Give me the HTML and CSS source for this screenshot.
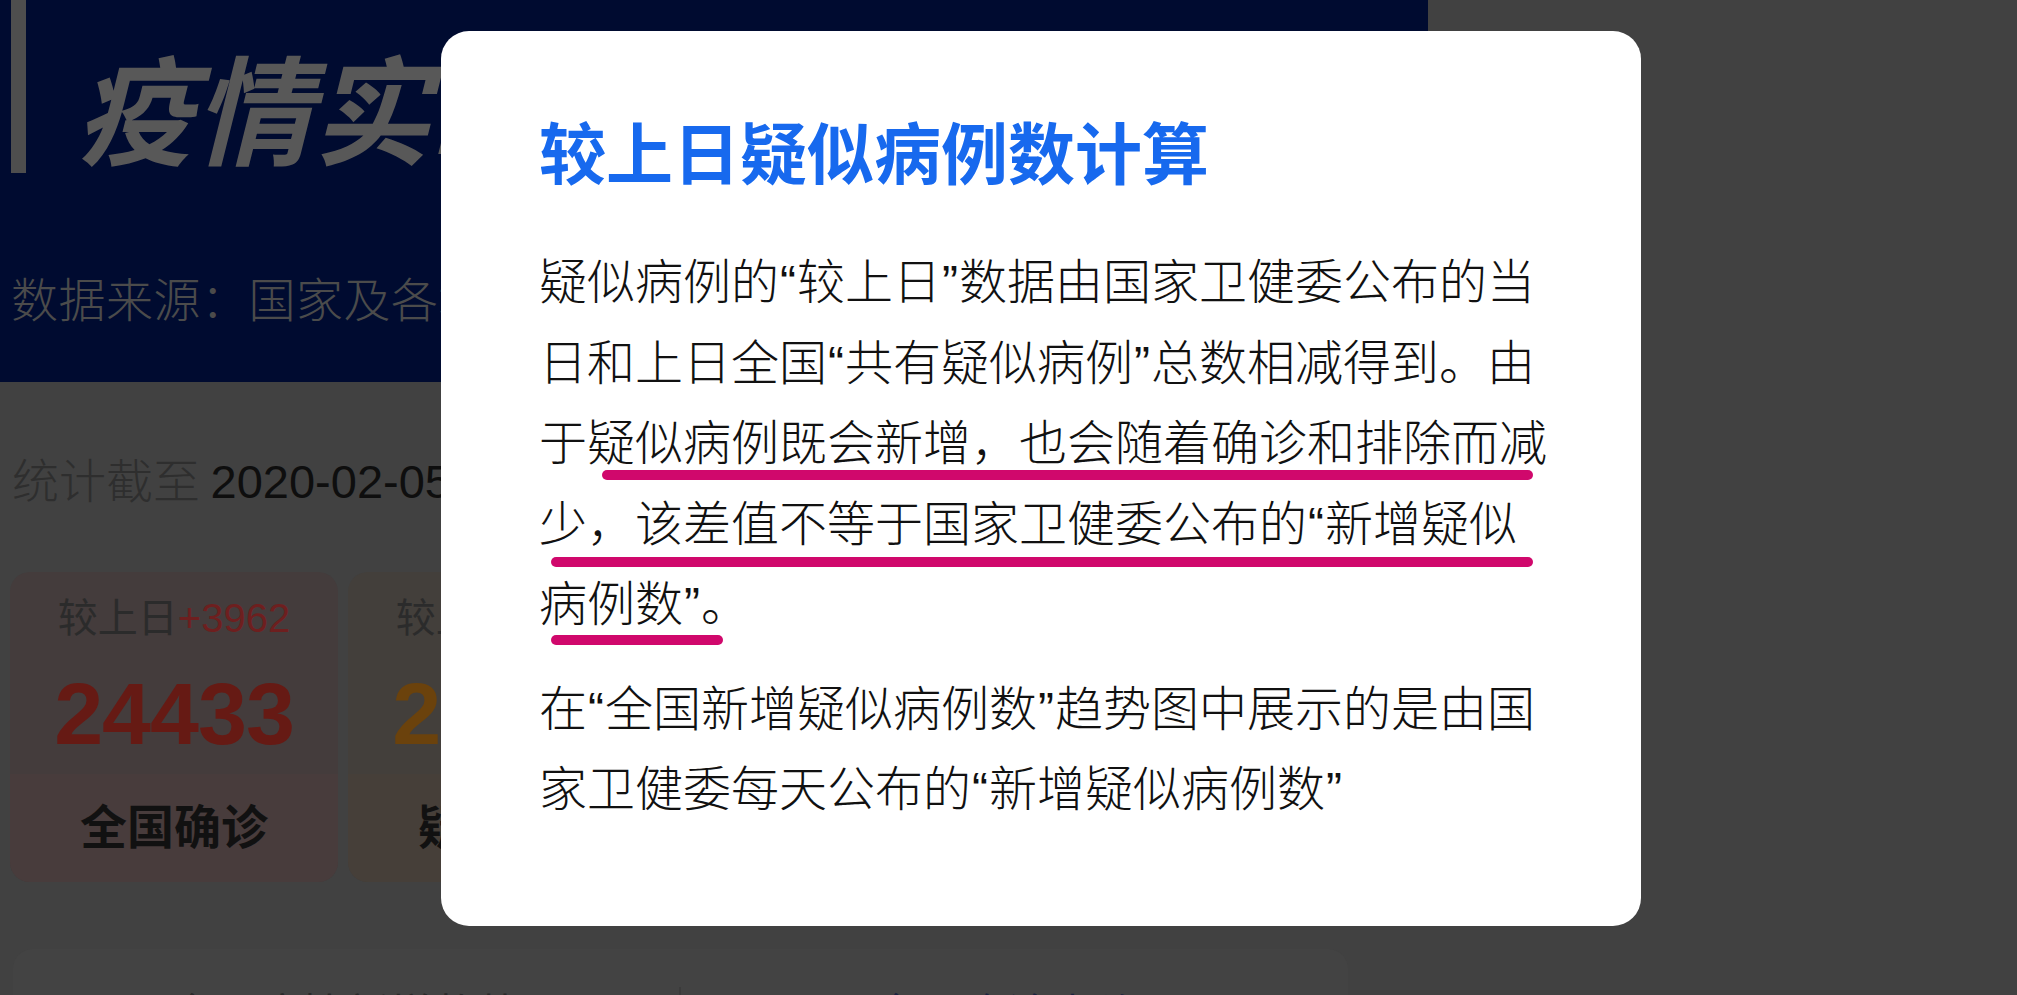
FILE: index.html
```html
<!DOCTYPE html>
<html lang="zh-CN">
<head>
<meta charset="utf-8">
<title>较上日疑似病例数计算</title>
<link rel="stylesheet" href="styles.css">
</head>
<body>
<div class="page">
  <header class="hero">
    <div class="hero-title-row">
      <h1 class="hero-title">疫情实时大数据报告</h1>
    </div>
    <p class="hero-source">数据来源：国家及各地卫健委每日信息发布</p>
  </header>

  <main class="content">
    <p class="stat-time"><span class="stat-label">统计截至</span> <span class="stat-date">2020-02-05 23:41 更新于 2 分钟前</span></p>

    <div class="cards">
      <div class="card card-confirm">
        <div class="card-top">
          <p class="card-delta">较上日<span class="delta-num">+3962</span></p>
          <p class="card-num">24433</p>
        </div>
        <div class="card-band">全国确诊</div>
      </div>
      <div class="card card-suspect">
        <div class="card-top">
          <p class="card-delta">较上日<span class="delta-num">+5328</span></p>
          <p class="card-num">23260</p>
        </div>
        <div class="card-band">疑似病例</div>
      </div>
      <div class="card card-cure">
        <div class="card-top">
          <p class="card-delta">较上日<span class="delta-num">+262</span></p>
          <p class="card-num">907</p>
        </div>
        <div class="card-band">治愈人数</div>
      </div>
      <div class="card card-dead">
        <div class="card-top">
          <p class="card-delta">较上日<span class="delta-num">+65</span></p>
          <p class="card-num">491</p>
        </div>
        <div class="card-band">死亡人数</div>
      </div>
    </div>

    <section class="panel">
      <div class="panel-tabs">
        <span class="panel-tab">全国疫情新增趋势</span>
        <span class="panel-tab panel-tab-active">全国确诊/疑似</span>
      </div>
    </section>
  </main>
</div>

<div class="modal" role="dialog">
  <h2 class="modal-title">较上日疑似病例数计算</h2>
  <div class="modal-text first">
    <p>疑似病例的<span class="q">“</span>较上日<span class="q">”</span>数据由国家卫健委公布的当日和上日全国<span class="q">“</span>共有疑似病例<span class="q">”</span>总数相减得到。由于疑似病例既会新增，也会随着确诊和排除而减少，该差值不等于国家卫健委公布的<span class="q">“</span>新增疑似病例数<span class="q">”</span>。</p>
    <span class="mark mark-1"></span>
    <span class="mark mark-2"></span>
    <span class="mark mark-3"></span>
  </div>
  <div class="modal-text">
    <p>在<span class="q">“</span>全国新增疑似病例数<span class="q">”</span>趋势图中展示的是由国家卫健委每天公布的<span class="q">“</span>新增疑似病例数<span class="q">”</span></p>
  </div>
</div>
</body>
</html>
```

FILE: styles.css
```css
* { box-sizing: border-box; }

html, body {
  margin: 0;
  padding: 0;
}

body {
  width: 2017px;
  height: 995px;
  overflow: hidden;
  background: #414141;
  font-family: "Noto Sans CJK SC", "Liberation Sans", sans-serif;
}

p, h1, h2 { margin: 0; }

.page {
  width: 1428px;
}

/* header */
.hero {
  height: 382px;
  background: #000b30;
  padding-left: 11px;
  overflow: hidden;
}

.hero-title-row {
  height: 173px;
  border-left: 15px solid #4e4e4e;
  padding-top: 46px;
  padding-left: 50px;
}

.hero-title {
  font-size: 118px;
  line-height: 118px;
  font-weight: 700;
  font-style: italic;
  color: #585858;
  white-space: nowrap;
}

.hero-source {
  margin-top: 100px;
  font-size: 47px;
  line-height: 47px;
  letter-spacing: 0.5px;
  color: #4b4b4b;
  white-space: nowrap;
  font-weight: 300;
}

/* content under header */
.content {
  padding-left: 10px;
  width: 1350px;
}

.stat-time {
  padding-top: 72px;
  padding-left: 2px;
  font-size: 47px;
  line-height: 47px;
  white-space: nowrap;
}

.stat-label {
  color: #2e2e2e;
  font-weight: 300;
}

.stat-date {
  font-family: "Liberation Sans", sans-serif;
  color: #0e0e0e;
}

.cards {
  margin-top: 67px;
  display: grid;
  grid-template-columns: repeat(4, 328px);
  gap: 10px;
}

.card {
  height: 310px;
  border-radius: 20px;
  overflow: hidden;
  display: flex;
  flex-direction: column;
  text-align: center;
}

.card-top {
  flex: 1;
  padding-top: 22px;
}

.card-delta {
  font-size: 40px;
  line-height: 42px;
  color: #2b2b2b;
  white-space: nowrap;
}

.delta-num {
  font-family: "Liberation Sans", sans-serif;
}

.card-num {
  margin-top: 31px;
  font-family: "Liberation Sans", sans-serif;
  font-weight: 700;
  font-size: 88px;
  line-height: 88px;
  letter-spacing: -1px;
}

.card-band {
  height: 108px;
  padding-bottom: 10px;
  display: flex;
  align-items: center;
  justify-content: center;
  font-size: 47px;
  font-weight: 700;
  color: #111111;
}

.card-confirm { background: #443c3c; }
.card-confirm .card-band { background: #483c3c; }
.card-confirm .delta-num { color: #6e1f1f; }
.card-confirm .card-num { color: #661a14; }

.card-suspect { background: #433f3b; }
.card-suspect .card-band { background: #463f39; }
.card-suspect .delta-num { color: #6b4212; }
.card-suspect .card-num { color: #6b420c; }

.card-cure { background: #3e4442; }
.card-cure .card-band { background: #3d4642; }
.card-cure .delta-num { color: #1f5a3c; }
.card-cure .card-num { color: #1f5a3c; }

.card-dead { background: #424242; }
.card-dead .card-band { background: #454545; }
.card-dead .delta-num { color: #2f2f2f; }
.card-dead .card-num { color: #2f2f2f; }

.panel {
  margin-top: 67px;
  margin-left: 3px;
  width: 1335px;
  height: 200px;
  background: #434343;
  border-radius: 20px;
}

.panel-tabs {
  display: grid;
  grid-template-columns: 1fr 1fr;
  padding-top: 38px;
}

.panel-tab {
  text-align: center;
  font-size: 44px;
  line-height: 50px;
  color: #2a2a2a;
  border-right: 2px solid #3b3b3b;
}

.panel-tab-active {
  color: #1a2240;
  border-right: 0;
}

/* modal */
.modal {
  position: absolute;
  top: 31px;
  left: 441px;
  width: 1200px;
  height: 895px;
  background: #ffffff;
  border-radius: 28px;
  padding: 79px 92px 0 98px;
}

.modal-title {
  font-size: 67px;
  line-height: 80px;
  font-weight: 700;
  color: #1769ee;
  white-space: nowrap;
}

.modal-text {
  position: relative;
  margin-top: 24px;
  font-size: 48px;
  line-height: 80.5px;
  font-weight: 300;
  color: #111111;
}

.modal-text.first {
  margin-top: 48px;
}

.q {
  font-family: "Liberation Sans", sans-serif;
  line-height: 1;
  padding: 0 1px;
}

.mark {
  position: absolute;
  height: 10px;
  border-radius: 5px;
  background: #d0086c;
}

.mark-1 { left: 63px; top: 232px; width: 931px; }
.mark-2 { left: 12px; top: 319px; width: 982px; }
.mark-3 { left: 12px; top: 397px; width: 172px; }
```
